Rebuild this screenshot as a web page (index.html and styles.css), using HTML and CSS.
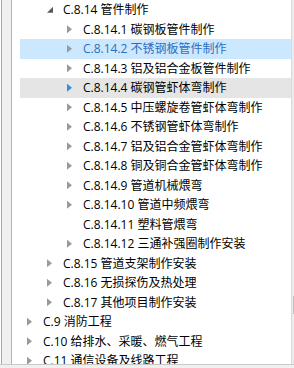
FILE: index.html
```html
<!DOCTYPE html>
<html lang="zh-CN">
<head>
    <meta charset="UTF-8">
    <title>清单目录</title>
    <link rel="stylesheet" href="styles.css">
</head>
<body>
<div class="panel">
    <div class="main">
        <div class="gutter"></div>
        <ul class="tree">
            <li class="row lv2"><i class="tw"></i><span>C.8.14 管件制作</span></li>
            <li class="row lv3"><i class="arrow"></i><span>C.8.14.1 碳钢板管件制作</span></li>
            <li class="row lv3 selected"><i class="arrow"></i><span>C.8.14.2 不锈钢板管件制作</span></li>
            <li class="row lv3"><i class="arrow"></i><span>C.8.14.3 铝及铝合金板管件制作</span></li>
            <li class="row lv3 hover"><i class="arrow"></i><span>C.8.14.4 碳钢管虾体弯制作</span></li>
            <li class="row lv3"><i class="arrow"></i><span>C.8.14.5 中压螺旋卷管虾体弯制作</span></li>
            <li class="row lv3"><i class="arrow"></i><span>C.8.14.6 不锈钢管虾体弯制作</span></li>
            <li class="row lv3"><i class="arrow"></i><span>C.8.14.7 铝及铝合金管虾体弯制作</span></li>
            <li class="row lv3"><i class="arrow"></i><span>C.8.14.8 铜及铜合金管虾体弯制作</span></li>
            <li class="row lv3"><i class="arrow"></i><span>C.8.14.9 管道机械煨弯</span></li>
            <li class="row lv3"><i class="arrow"></i><span>C.8.14.10 管道中频煨弯</span></li>
            <li class="row lv3"><i></i><span>C.8.14.11 塑料管煨弯</span></li>
            <li class="row lv3"><i class="arrow"></i><span>C.8.14.12 三通补强圈制作安装</span></li>
            <li class="row lv2"><i class="arrow"></i><span>C.8.15 管道支架制作安装</span></li>
            <li class="row lv2"><i class="arrow"></i><span>C.8.16 无损探伤及热处理</span></li>
            <li class="row lv2"><i class="arrow"></i><span>C.8.17 其他项目制作安装</span></li>
            <li class="row lv1"><i class="arrow"></i><span>C.9 消防工程</span></li>
            <li class="row lv1"><i class="arrow"></i><span>C.10 给排水、采暖、燃气工程</span></li>
            <li class="row lv1"><i class="arrow"></i><span>C.11 通信设备及线路工程</span></li>
        </ul>
        <div class="scrollbar"><div class="thumb"></div></div>
    </div>
    <div class="status"></div>
</div>
</body>
</html>
```
FILE: styles.css
```css
* {
    margin: 0;
    padding: 0;
    box-sizing: border-box;
}

body {
    width: 294px;
    height: 368px;
    overflow: hidden;
    background-color: #f0f0f0;
    font-family: "Open Sans", "Noto Sans CJK SC", sans-serif;
    font-size: 12px;
    color: #000;
}

.panel {
    display: flex;
    flex-direction: column;
    height: 368px;
}

.main {
    display: flex;
    height: 365px;
    border-bottom: 1px solid #c9c9c9;
    background-color: #fff;
}

.gutter {
    flex: none;
    width: 11px;
    margin-left: 1px;
    background-color: #f0f0f0;
    border-left: 1px solid #a9a9a9;
    border-right: 1px solid #b4b4b4;
}

.tree {
    flex: 1;
    list-style: none;
    padding-left: 8px;
    overflow: hidden;
}

.row {
    display: flex;
    align-items: center;
    height: 19.5px;
    white-space: nowrap;
}

.row span {
    line-height: 19.5px;
}

.lv1 { padding-left: 7px; }
.lv2 { padding-left: 27px; }
.lv3 { padding-left: 47px; }

.row i {
    display: block;
    flex: none;
    width: 16px;
    height: 8px;
}

.arrow::before,
.tw::before {
    content: "";
    display: block;
    background-color: #9a9a9a;
}

.arrow::before {
    width: 5px;
    height: 8px;
    clip-path: polygon(0 0, 100% 50%, 0 100%);
}

.hover .arrow::before {
    background-color: #2f8fe0;
}

.tw::before {
    width: 6px;
    height: 6px;
    margin-top: 1px;
    background-color: #595959;
    clip-path: polygon(100% 0, 100% 100%, 0 100%);
}

.selected {
    background-color: #cce8ff;
    color: #2c6fbd;
}

.hover {
    background-color: #e5e5e5;
}

.scrollbar {
    flex: none;
    width: 3px;
    background-color: #ececec;
    border-left: 1px solid #dadada;
    position: relative;
}

.thumb {
    position: absolute;
    right: 0;
    top: 296px;
    width: 1px;
    height: 18px;
    background-color: #bdbdbd;
}

.status {
    flex: 1;
    background-color: #f0f0f0;
}
```
